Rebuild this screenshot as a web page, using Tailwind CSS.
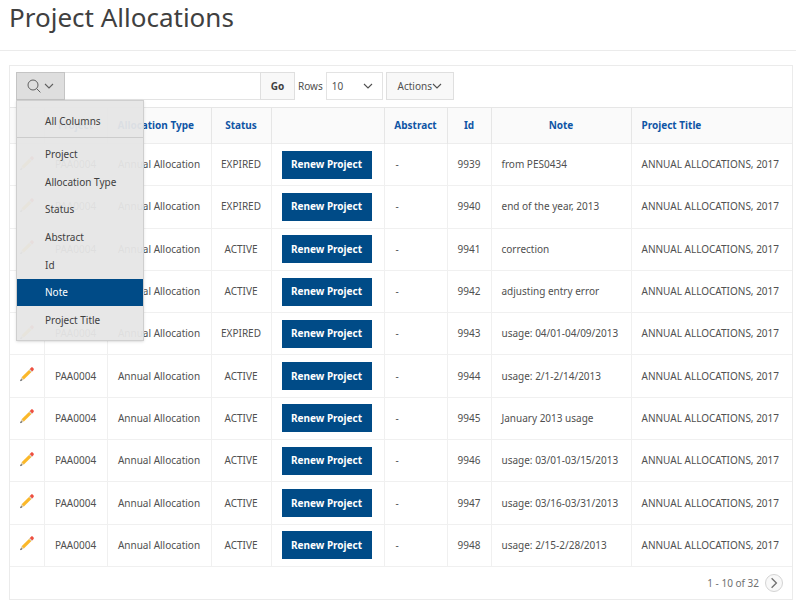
<!DOCTYPE html>
<html lang="en">
<head>
  <meta charset="UTF-8" />
  <meta name="viewport" content="width=device-width, initial-scale=1" />
  <title>Project Allocations</title>
  <script src="https://cdn.jsdelivr.net/npm/@tailwindcss/browser@4"></script>
</head>
<body class="bg-white font-['Noto_Sans','Open_Sans',sans-serif] text-[10px] text-[#505050]">
  <!-- shared icons -->
  <svg class="hidden">
    <symbol id="chevron" viewBox="0 0 10 10">
      <path d="M1 3l4 4 4-4" fill="none" stroke="currentColor" stroke-width="1.1" />
    </symbol>
    <symbol id="pencil" viewBox="0 0 16 16">
      <path d="M2.600 11.200L11 3l2.200 2.200-8.300 8.300z" fill="#fbb829" />
      <path d="M2.600 11.200l2.300 2.300L1.200 15z" fill="#dcc79c" />
      <path d="M2 12.900l1.300 1.300L1 15.200z" fill="#4b5563" />
      <path d="M10 3.900l.9-.9 2.300 2.300-.9.9z" fill="#d5d9dd" />
      <path d="M10.800 3l1.200-1.200c.6-.6 1.300-.6 1.900 0l.5.5c.6.600.600 1.300 0 1.900l-1.200 1.200z" fill="#ee4f3f" />
    </symbol>
  </svg>

  <header class="h-[51px] border-b border-[#ebebeb] px-[9px]">
    <h1 class="text-[26px] leading-[34px] text-[#404040]">Project Allocations</h1>
  </header>

  <main class="pt-[14px] pr-[3px] pl-[9px]">
    <section class="border border-[#ebebeb] border-b-2">
      <!-- toolbar -->
      <div class="flex items-center px-[6px] pt-[6px] pb-[7px]">
        <div class="relative">
          <button id="searchButton" type="button" aria-label="Select columns to search" aria-expanded="true" class="flex h-7 w-[49px] items-center justify-center gap-[2px] border border-[#c4c4c4] bg-[#dedede] pr-[2px] text-[#606060]">
            <svg class="size-4" viewBox="0 0 16 16" fill="none" stroke="currentColor" stroke-width="1">
              <circle cx="7" cy="7" r="5" />
              <path d="M10.600 10.600l3.800 3.800" />
            </svg>
            <svg class="size-[10px]"><use href="#chevron" /></svg>
          </button>
          <div id="columnMenu" class="absolute top-7 left-0 z-10 w-32 border border-[#cfcfcf] bg-[#e6e6e6]/95 text-[#404040] shadow-sm">
            <div class="border-b border-[#cccccc] pt-[6px] pb-[2px]">
              <button type="button" class="block h-7 w-full pl-7 text-left">All Columns</button>
            </div>
            <div class="flex h-[202px] flex-col pt-[3px] pb-[6px]">
              <button type="button" class="flex-1 pl-7 text-left">Project</button>
              <button type="button" class="flex-1 pl-7 text-left">Allocation Type</button>
              <button type="button" class="flex-1 pl-7 text-left">Status</button>
              <button type="button" class="flex-1 pl-7 text-left">Abstract</button>
              <button type="button" class="flex-1 pl-7 text-left">Id</button>
              <button type="button" class="flex-1 bg-[#004b87] pl-7 text-left text-white">Note</button>
              <button type="button" class="flex-1 pl-7 text-left">Project Title</button>
            </div>
          </div>
        </div>
        <input type="text" aria-label="Search" class="h-7 w-[195px] border-y border-[#e3e3e3] px-2 outline-none" />
        <button type="button" class="h-7 w-[35px] border border-[#dfdfdf] bg-[#f8f8f8] font-bold text-[#404040]">Go</button>
        <label for="rows" class="ml-[3px]">Rows</label>
        <div class="relative ml-[3px]">
          <select id="rows" class="h-7 w-[57px] appearance-none border border-[#e3e3e3] bg-white pl-[5px]">
            <option>5</option>
            <option selected>10</option>
            <option>15</option>
            <option>20</option>
          </select>
          <svg class="pointer-events-none absolute top-[9px] right-[10px] size-[10px]"><use href="#chevron" /></svg>
        </div>
        <button type="button" class="ml-[3px] flex h-7 w-[68px] items-center justify-center border border-[#dfdfdf] bg-[#f8f8f8]">
          Actions
          <svg class="size-[10px]"><use href="#chevron" /></svg>
        </button>
      </div>

      <!-- report -->
      <table class="h-[460px] w-full table-fixed border-collapse border-y border-[#e6e6e6]">
        <colgroup>
          <col class="w-[34px]" />
          <col class="w-[63px]" />
          <col class="w-[104px]" />
          <col class="w-[60px]" />
          <col class="w-[113px]" />
          <col class="w-[63px]" />
          <col class="w-[44px]" />
          <col class="w-[140px]" />
          <col />
        </colgroup>
        <thead class="bg-[#fafafa] text-[#0f55a5]">
          <tr class="h-9 border-b border-[#ededed]">
            <th></th>
            <th class="border-l border-[#e6e6e6]">Project</th>
            <th class="border-l border-[#e6e6e6] pl-[10px] text-left">Allocation Type</th>
            <th class="border-l border-[#e6e6e6]">Status</th>
            <th class="border-l border-[#e6e6e6]"></th>
            <th class="border-l border-[#e6e6e6]">Abstract</th>
            <th class="border-l border-[#e6e6e6]">Id</th>
            <th class="border-l border-[#e6e6e6]">Note</th>
            <th class="border-l border-[#e6e6e6] pl-[10px] text-left">Project Title</th>
          </tr>
        </thead>
        <tbody id="reportRows"></tbody>
      </table>

      <!-- pagination -->
      <div class="flex h-8 items-center justify-end gap-[6px] pr-[9px] text-[#707070]">
        <span>1 - 10 of 32</span>
        <button type="button" aria-label="Next" class="flex size-[18px] items-center justify-center rounded-full border border-[#d4d4d4] bg-[#f8f8f8]">
          <svg class="size-3 -rotate-90"><use href="#chevron" /></svg>
        </button>
      </div>
    </section>
  </main>

  <script>
    const rows = [
      ['EXPIRED', 9939, 'from PES0434'],
      ['EXPIRED', 9940, 'end of the year, 2013'],
      ['ACTIVE', 9941, 'correction'],
      ['ACTIVE', 9942, 'adjusting entry error'],
      ['EXPIRED', 9943, 'usage: 04/01-04/09/2013'],
      ['ACTIVE', 9944, 'usage: 2/1-2/14/2013'],
      ['ACTIVE', 9945, 'January 2013 usage'],
      ['ACTIVE', 9946, 'usage: 03/01-03/15/2013'],
      ['ACTIVE', 9947, 'usage: 03/16-03/31/2013'],
      ['ACTIVE', 9948, 'usage: 2/15-2/28/2013'],
    ];

    document.getElementById('reportRows').innerHTML = rows.map(([status, id, note]) => `
      <tr class="border-b border-[#f0f0f0] whitespace-nowrap">
        <td><a href="#" aria-label="Edit ${id}" class="flex justify-center pb-1"><svg class="size-4"><use href="#pencil" /></svg></a></td>
        <td class="border-l border-[#f0f0f0] text-center">PAA0004</td>
        <td class="border-l border-[#f0f0f0] text-center">Annual Allocation</td>
        <td class="border-l border-[#f0f0f0] text-center">${status}</td>
        <td class="border-l border-[#f0f0f0] px-[10px]"><button type="button" class="block h-7 w-[90px] bg-[#004b87] font-bold text-white">Renew Project</button></td>
        <td class="border-l border-[#f0f0f0] pl-[11px]">-</td>
        <td class="border-l border-[#f0f0f0] text-center">${id}</td>
        <td class="border-l border-[#f0f0f0] pl-[10px]">${note}</td>
        <td class="border-l border-[#f0f0f0] pl-[10px]">ANNUAL ALLOCATIONS, 2017</td>
      </tr>`).join('');

    const menu = document.getElementById('columnMenu');
    document.getElementById('searchButton').addEventListener('click', (e) => {
      const hidden = menu.classList.toggle('hidden');
      e.currentTarget.setAttribute('aria-expanded', String(!hidden));
    });
  </script>
</body>
</html>
